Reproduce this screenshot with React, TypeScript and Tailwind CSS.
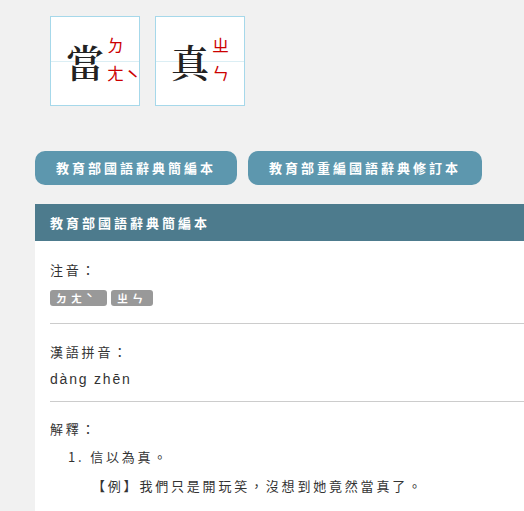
import React from 'react'

const cjk = "font-['Noto_Sans_CJK_TC',sans-serif]"

function CharBox({ ch, zhuyin, tone }: { ch: string; zhuyin: string[]; tone?: string }) {
  return (
    <div className="relative w-[90px] h-[90px] bg-white border border-[#a6d8ea] flex items-center">
      {/* faint midline guide */}
      <div className="absolute left-0 right-0 top-[44px] h-px bg-[#dbeef4]" />
      <span className="relative ml-[15px] text-[38px] leading-none font-semibold text-[#222] font-['Noto_Serif_CJK_TC','Noto_Sans_CJK_TC',serif]">
        {ch}
      </span>
      <div className="relative ml-[3px] -mt-[6px] flex items-center">
        <div className={`flex flex-col gap-[9px] text-[17px] leading-[19px] text-[#c00] ${cjk}`}>
          {zhuyin.map((z) => (
            <span key={z}>{z}</span>
          ))}
        </div>
        {tone && (
          <span className={`mt-[40px] ml-[2px] text-[22px] leading-none text-[#c00] ${cjk}`}>{tone}</span>
        )}
      </div>
    </div>
  )
}

function Tag({ chars }: { chars: string[] }) {
  return (
    <span className="h-[16px] px-[6px] rounded-[3px] bg-[#999] text-white text-[11px] font-bold leading-[16px] flex">
      {chars.map((c, i) => (
        <span key={i} className="inline-block w-[15px]">
          {c}
        </span>
      ))}
    </span>
  )
}

export default function App() {
  return (
    <div className={`w-[524px] h-[511px] overflow-hidden bg-[#f1f1f1] ${cjk}`}>
      <div className="flex gap-[15px] pl-[50px] pt-[16px]">
        <CharBox ch="當" zhuyin={['ㄉ', 'ㄤ']} tone="ˋ" />
        <CharBox ch="真" zhuyin={['ㄓ', 'ㄣ']} />
      </div>

      <div className="flex gap-[11px] pl-[35px] mt-[45px]">
        <button className="h-[34px] w-[202px] rounded-[10px] bg-[#5d97ae] text-white text-[13px] font-bold tracking-[3px]">
          教育部國語辭典簡編本
        </button>
        <button className="h-[34px] w-[234px] rounded-[10px] bg-[#5d97ae] text-white text-[13px] font-bold tracking-[3px]">
          教育部重編國語辭典修訂本
        </button>
      </div>

      <div className="ml-[35px] mt-[19px] w-[560px] h-[400px] bg-white">
        <div className="h-[37px] bg-[#4d7b8d] flex items-center pl-[15px] text-white text-[13px] font-bold tracking-[3px]">
          教育部國語辭典簡編本
        </div>
        <div className="pl-[15px] text-[13px] text-[#333] tracking-[2.8px]">
          <div className="pt-[19px] pb-[17px] border-b border-[#ccc]">
            <div className="leading-[20px]">注音：</div>
            <div className="flex gap-[4px] mt-[10px]">
              <Tag chars={['ㄉ', 'ㄤ', 'ˋ']} />
              <Tag chars={['ㄓ', 'ㄣ']} />
            </div>
          </div>
          <div className="pt-[18px] pb-[12px] border-b border-[#ccc]">
            <div className="leading-[20px]">漢語拼音：</div>
            <div className="mt-[7px] leading-[20px] text-[14px] tracking-[1.8px] font-['Liberation_Sans',sans-serif]">dàng zhēn</div>
          </div>
          <div className="pt-[17px]">
            <div className="leading-[20px]">解釋：</div>
            <div className="pl-[18px] mt-[8px] leading-[20px]">1. 信以為真。</div>
            <div className="pl-[42px] mt-[9px] leading-[20px]">【例】我們只是開玩笑，沒想到她竟然當真了。</div>
          </div>
        </div>
      </div>
    </div>
  )
}
